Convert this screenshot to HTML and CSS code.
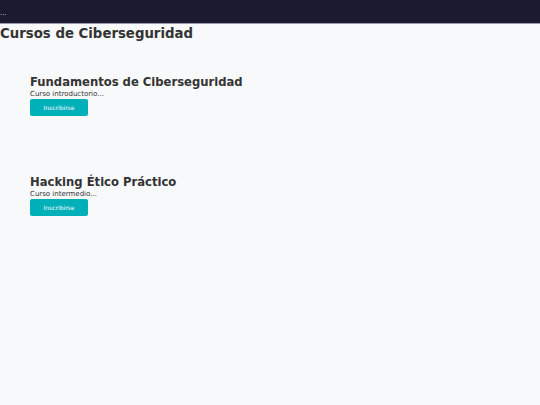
FILE: index.html
```html
<!doctype html>
<html lang="es">
  <head>
    <meta charset="UTF-8">
    <meta name="viewport" content="width=device-width, initial-scale=1.0">
    <title>Cursos de Ciberseguridad</title>
    <link rel="stylesheet" href="styles.css">
  </head>
  <body>
    <header class="topbar">
      <span class="topbar-menu">...</span>
    </header>

    <main class="content">
      <h1 class="page-title">Cursos de Ciberseguridad</h1>

      <div class="course-list">
        <div class="course">
          <h2 class="course-title">Fundamentos de Ciberseguridad</h2>
          <p class="course-desc">Curso introductorio...</p>
          <button class="enroll-btn">Inscribirse</button>
        </div>

        <div class="course">
          <h2 class="course-title">Hacking Ético Práctico</h2>
          <p class="course-desc">Curso intermedio...</p>
          <button class="enroll-btn">Inscribirse</button>
        </div>
      </div>
    </main>
  </body>
</html>
```

FILE: styles.css
```css
body {
  font-family: 'DejaVu Sans', sans-serif;
  background: #f8f9fb;
  color: #333;
  margin: 0;
  padding: 0;
}

.topbar {
  height: 24px;
  background: #1b1a2e;
  border-bottom: 1px solid #9a9aab;
  box-sizing: border-box;
  display: flex;
  align-items: flex-end;
  padding-bottom: 6px;
}

.topbar-menu {
  color: #d0d0dc;
  font-size: 7px;
  line-height: 8px;
}

.page-title {
  margin: 0;
  font-size: 13.3px;
  line-height: 20px;
  font-weight: bold;
  color: #333;
}

.course {
  padding: 30px 30px 28px;
}

.course-title {
  margin: 0;
  font-size: 11.6px;
  line-height: 16px;
  font-weight: bold;
  color: #333;
}

.course-desc {
  margin: 0;
  font-size: 7px;
  line-height: 9px;
  color: #333;
}

.enroll-btn {
  display: block;
  width: 58px;
  height: 17px;
  padding: 0;
  background: #00b0b9;
  color: #fff;
  border: none;
  border-radius: 2px;
  font-family: 'DejaVu Sans', sans-serif;
  font-size: 6px;
  cursor: pointer;
}
```
